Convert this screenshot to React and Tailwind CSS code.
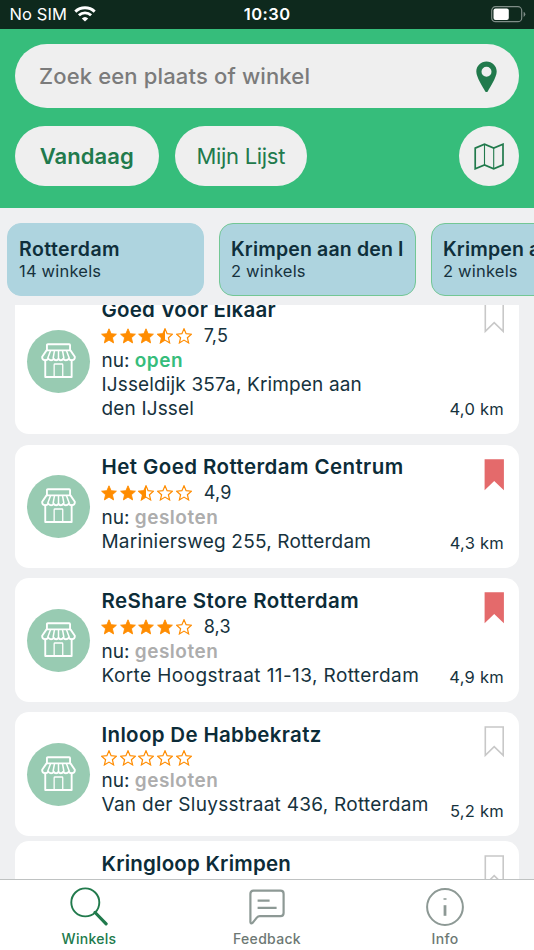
import React from "react";

const STAR = "M8 0.8 L10.1 5.7 L15.4 6.2 L11.4 9.7 L12.6 14.9 L8 12.1 L3.4 14.9 L4.6 9.7 L0.6 6.2 L5.9 5.7 Z";
const HALF = "M8 0.8 L8 12.1 L3.4 14.9 L4.6 9.7 L0.6 6.2 L5.9 5.7 Z";

function Star({ fill }) {
  return (
    <svg width="16" height="16" viewBox="0 0 16 16" className="shrink-0">
      <path d={STAR} fill={fill === 1 ? "#ff8c00" : "none"} stroke="#ff8c00" strokeWidth={fill === 1 ? 0.9 : 1.2} />
      {fill === 0.5 && <path d={HALF} fill="#ff8c00" />}
    </svg>
  );
}

function Stars({ value }) {
  return (
    <div className="-ml-[0.6px] flex gap-[2.7px]">
      {[0, 1, 2, 3, 4].map((i) => (
        <Star key={i} fill={value >= i + 1 ? 1 : value >= i + 0.5 ? 0.5 : 0} />
      ))}
    </div>
  );
}

function ShopIcon() {
  return (
    <svg width="35" height="36" viewBox="0 0 35.4 36" preserveAspectRatio="none" fill="none" stroke="#fff" strokeWidth="1.9" strokeLinejoin="round" strokeLinecap="round">
      <path d="M6 7.2V2.2Q6 1.3 6.9 1.3H28.5Q29.4 1.3 29.4 2.2V7.2" />
      <path d="M5.6 7.4H29.8L34.2 13.7Q34.5 17 31.4 17.3Q29 17.4 28.2 15.6Q27 17.3 25.2 17.3Q23.4 17.3 22.6 15.6Q21.6 17.3 20 17.3Q18.5 17.3 17.7 15.6Q16.9 17.3 15.3 17.3Q13.6 17.3 12.8 15.6Q11.9 17.3 10.1 17.3Q8.3 17.3 7.2 15.6Q6.4 17.3 4 17.3Q.9 17 1.2 13.7Z" />
      <path d="M9.6 7.8L6.9 15M13.6 7.8L12.3 15M17.7 7.8V15M21.8 7.8L23.1 15M25.8 7.8L28.5 15" strokeWidth="1.5" />
      <path d="M4.3 17.5V34H31V17.5" />
      <path d="M13.3 34V21.8Q13.3 21 14.1 21H21.2Q22 21 22 21.8V34" strokeWidth="1.3" />
    </svg>
  );
}

function Bookmark({ saved }) {
  return (
    <svg width="20" height="32" viewBox="0 0 20 32" className="block">
      {saved ? (
        <path d="M.6 .2H19.9V31.2L10.2 22L.6 31.2Z" fill="#e46a6b" />
      ) : (
        <path d="M1.3 1H19.2V29.4L10.2 20.7L1.3 29.4Z" fill="none" stroke="#c8c8c8" strokeWidth="1.6" />
      )}
    </svg>
  );
}

const shops = [
  { name: "Goed Voor Elkaar", nameCls: "tracking-[0.2px]", addressCls: "tracking-[0.15px]", rating: 3.5, score: "7,5", open: true, address: ["IJsseldijk 357a, Krimpen aan", "den IJssel"], km: "4,0 km", card: "h-[146px] mb-[10.5px]", pad: "pt-[10px]" },
  { name: "Het Goed Rotterdam Centrum", nameCls: "tracking-[0.42px]", addressCls: "tracking-[0.2px]", rating: 2.5, score: "4,9", address: ["Mariniersweg 255, Rotterdam"], km: "4,3 km", saved: true, card: "h-[123.5px] mb-[10px]", pad: "pt-[10.4px]" },
  { name: "ReShare Store Rotterdam", nameCls: "tracking-[0.43px]", addressCls: "tracking-[0.41px]", rating: 4, score: "8,3", address: ["Korte Hoogstraat 11-13, Rotterdam"], km: "4,9 km", saved: true, card: "h-[124px] mb-[10px]", pad: "pt-[11px]" },
  { name: "Inloop De Habbekratz", nameCls: "tracking-[0.33px]", addressCls: "tracking-[0.28px]", rating: 0, address: ["Van der Sluysstraat 436, Rotterdam"], km: "5,2 km", card: "h-[124px] mb-[4.5px]", pad: "pt-[11px]" },
  { name: "Kringloop Krimpen", nameCls: "tracking-[0.22px]", rating: 4, compact: true, card: "h-[148px]", pad: "pt-[11px]" },
];

function ShopCard({ shop }) {
  return (
    <article className={`flex shrink-0 rounded-[14px] bg-white pl-3 pr-[15px] ${shop.card}`}>
      <div className="flex w-[74.5px] shrink-0 items-center">
        <div className="flex size-[63px] items-center justify-center rounded-full bg-[#98cbb2]">
          <ShopIcon />
        </div>
      </div>
      <div className={`min-w-0 flex-1 whitespace-nowrap text-[19px] leading-6 text-[#16323d] ${shop.pad}`}>
        <h2 className={`text-[20.5px] font-semibold leading-6 text-[#0c2c38] ${shop.nameCls}`}>{shop.name}</h2>
        {!shop.compact && (
          <>
            <div className={shop.score ? "flex h-[26.8px] items-center gap-[12px] pt-[2px]" : "flex h-[22px] items-center"}>
              <Stars value={shop.rating} />
              {shop.score && <span className="text-[18px] tracking-[0.2px]">{shop.score}</span>}
            </div>
            <p>
              nu: <span className={shop.open ? "font-semibold tracking-[0.5px] text-[#36bd7b]" : "font-semibold tracking-[0.5px] text-[#adadad]"}>{shop.open ? "open" : "gesloten"}</span>
            </p>
            {shop.address.map((line) => (
              <p key={line} className={shop.addressCls}>{line}</p>
            ))}
          </>
        )}
      </div>
      <div className="flex w-[60px] shrink-0 flex-col items-end justify-between pb-[14px] pt-[14px]">
        <Bookmark saved={shop.saved} />
        {shop.km && <span className="whitespace-nowrap text-[16.5px] leading-[22px] tracking-[0.25px] text-[#16323d]">{shop.km}</span>}
      </div>
    </article>
  );
}

function Chip({ title, count, active }) {
  return (
    <div className={`flex h-[72.5px] w-[197px] shrink-0 flex-col rounded-[14px] border-[1.5px] bg-[#aed4df] px-[11px] pt-[13px] text-[#16323d] ${active ? "border-[#aed4df]" : "border-[#73c795]"}`}>
      <span className={`overflow-hidden whitespace-nowrap text-[19.5px] font-semibold leading-6 text-[#0f2f3b] ${active ? "tracking-[0.45px]" : "tracking-[0.15px]"}`}>{title}</span>
      <span className="text-[16.5px] leading-[20px] tracking-[0.2px]">{count} winkels</span>
    </div>
  );
}

function Tab({ label, active, children }) {
  return (
    <div className={`flex flex-1 flex-col items-center ${active ? "text-[#217a4c]" : "text-[#6d7874]"}`}>
      <div className="flex h-[50px] items-center justify-center pt-[3px]">{children}</div>
      <span className="text-[14px] font-medium leading-[18px] tracking-[0.3px]">{label}</span>
    </div>
  );
}

export default function App() {
  return (
    <div className="flex h-[950px] w-[534px] flex-col overflow-hidden bg-[#eff0f2] font-['Inter',sans-serif]">
      <div className="grid h-[28.5px] shrink-0 grid-cols-3 items-center bg-[#0e291d] pl-[9.5px] pr-[8px] text-white">
        <div className="flex items-center gap-[7px]">
          <span className="pt-[1px] text-[16.5px] tracking-[0.1px]">No SIM</span>
          <svg width="22" height="16" viewBox="0 0 22 16" fill="none" stroke="#fff" strokeWidth="2.9">
            <path d="M1.3 5.6C6.8.5 15.2.5 20.7 5.6" />
            <path d="M4.9 9.3C8.4 6.1 13.6 6.1 17.1 9.3" />
            <path d="M7.8 12.4Q11 9.4 14.2 12.4L11 15.6Z" fill="#fff" stroke="none" />
          </svg>
        </div>
        <span className="pr-[1px] pt-[1px] text-center text-[16.5px] font-semibold tracking-[0.5px]">10:30</span>
        <div className="flex justify-end">
          <svg width="35" height="17" viewBox="0 0 35 17">
            <rect x=".7" y=".7" width="30" height="15" rx="3.8" fill="none" stroke="#7f8d87" strokeWidth="1.2" />
            <rect x="2.5" y="2.6" width="15.3" height="11.3" rx="2" fill="#fff" />
            <path d="M32.6 5.7Q34.3 6.5 34.3 8.3T32.6 10.9Z" fill="#7f8d87" />
          </svg>
        </div>
      </div>

      <header className="flex h-[179.5px] shrink-0 flex-col bg-[#36bd7b] px-[15px] pt-[15px]">
        <div className="flex h-[64.5px] shrink-0 items-center justify-between rounded-full bg-[#efefef] pl-[24px] pr-[22px]">
          <span className="pt-[2px] text-[22px] font-medium tracking-[0.15px] text-[#7b7b7b]">Zoek een plaats of winkel</span>
          <svg width="21" height="32" viewBox="0 0 21 32" className="mt-[2px]">
            <path fillRule="evenodd" d="M10.5.5C4.8.5.3 5 .3 10.5C.3 16.5 7.3 26.5 9.1 30.2Q10.5 32 11.9 30.2C13.7 26.5 20.7 16.5 20.7 10.5C20.7 5 16.2.5 10.5.5ZM10.5 5.7A5 5 0 1 1 10.5 15.7A5 5 0 1 1 10.5 5.7Z" fill="#217a4c" />
          </svg>
        </div>
        <div className="mt-[18px] flex h-[60px] shrink-0 text-[#217a4c]">
          <button className="mr-4 flex w-[143.5px] items-center justify-center rounded-full bg-[#efefef] text-[22px] font-semibold tracking-[0.05px]">Vandaag</button>
          <button className="flex w-[132.5px] items-center justify-center rounded-full bg-[#efefef] text-[22px] tracking-[-0.3px]">Mijn Lijst</button>
          <button className="ml-auto flex size-[60px] items-center justify-center rounded-full bg-[#efefef]">
            <svg width="30" height="27" viewBox="0 0 30 27" fill="none" stroke="#217a4c" strokeWidth="1.7">
              <path d="M1.2 5.1L10.5 1.2L19.7 5.1L29 1.2V21.9L19.7 25.8L10.5 21.9L1.2 25.8Z" />
              <path d="M10.5 1.2V21.9M19.7 5.1V25.8" strokeWidth="1.1" />
            </svg>
          </button>
        </div>
      </header>

      <div className="flex h-[97px] shrink-0 gap-[15px] overflow-hidden pl-[7px] pt-[15px]">
        <Chip title="Rotterdam" count={14} active />
        <Chip title="Krimpen aan den IJssel" count={2} />
        <Chip title="Krimpen aan de Lek" count={2} />
      </div>

      <main className="flex min-h-0 flex-1 flex-col overflow-hidden px-[15px]">
        <div className="-mt-[17px] flex flex-col">
          {shops.map((shop) => (
            <ShopCard key={shop.name} shop={shop} />
          ))}
        </div>
      </main>

      <nav className="flex h-[71px] shrink-0 border-t border-[#bfc2c2] bg-white">
        <Tab label="Winkels" active>
          <svg width="38" height="39" viewBox="0 0 38 39" fill="none" stroke="#217a4c">
            <circle cx="15.3" cy="15.4" r="14" strokeWidth="1.9" />
            <path d="M25.1 25.5L36.1 36.8" strokeWidth="3.2" strokeLinecap="round" />
          </svg>
        </Tab>
        <Tab label="Feedback">
          <svg width="36" height="36" viewBox="0 0 36 36" fill="none" stroke="#8d9995" strokeWidth="2.2" strokeLinejoin="round">
            <path d="M4.5 1.7H31.5Q34.6 1.7 34.6 4.8V24Q34.6 27.1 31.5 27.1H10.8Q9 27.1 7.8 28.6L3.8 33.6Q1.7 35.4 1.4 33V4.8Q1.4 1.7 4.5 1.7Z" />
            <path d="M8.6 11.7H20.6M8.6 18.8H27.6" />
          </svg>
        </Tab>
        <Tab label="Info">
          <svg width="38" height="38" viewBox="0 0 38 38" fill="none" stroke="#8d9995">
            <circle cx="19" cy="19" r="17.9" strokeWidth="2" />
            <path d="M19 17.2V27.8" strokeWidth="2.8" />
            <path d="M17.5 11H20.5" strokeWidth="1.5" />
          </svg>
        </Tab>
      </nav>
    </div>
  );
}
